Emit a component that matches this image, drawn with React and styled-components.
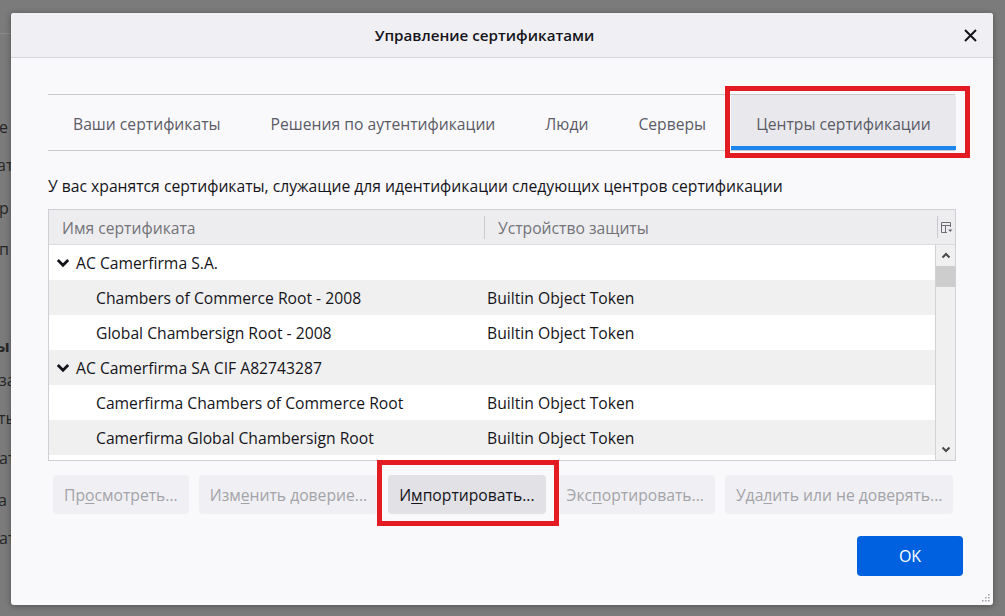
import React from 'react';
import styled, { createGlobalStyle } from 'styled-components';

const FONT = '"Open Sans", "Noto Sans", "Liberation Sans", sans-serif';
const FS = '15.7px';

const GlobalStyle = createGlobalStyle`
  html, body { margin: 0; padding: 0; }
  body {
    width: 1005px;
    height: 616px;
    overflow: hidden;
    background: #7b7b7b;
    font-family: ${FONT};
  }
`;

const Screen = styled.div`
  position: relative;
  width: 1005px;
  height: 616px;
  overflow: hidden;
  background: #7b7b7b;
`;

const Backdrop = styled.div`
  display: flex;
  flex-direction: column;
  width: 11px;
  overflow: hidden;
  padding-top: 33px;
  font-size: 16px;
  color: #262626;
`;

const BackdropRule = styled.div`
  height: 1px;
  background: #8a8a8a;
`;

const BackdropLine = styled.div`
  white-space: nowrap;
  line-height: 20px;
  margin-top: ${(p) => p.$gap}px;
  margin-left: ${(p) => p.$shift || 0}px;
  font-weight: ${(p) => (p.$bold ? 700 : 400)};
`;

const Dialog = styled.div`
  position: absolute;
  left: 11px;
  top: 13px;
  width: 982px;
  height: 592px;
  background: #f9f9fb;
  border-radius: 3px;
  box-shadow: 0 1px 6px rgba(0, 0, 0, 0.35);
  display: flex;
  flex-direction: column;
  overflow: hidden;
`;

const TitleBar = styled.div`
  height: 44px;
  flex: none;
  display: flex;
  align-items: center;
  background: #f0f0f4;
  border-bottom: 1px solid #d4d4da;
`;

const Title = styled.div`
  flex: 1;
  text-align: center;
  font-size: 15.2px;
  font-weight: 600;
  color: #15141a;
`;

const CloseButton = styled.div`
  width: 24px;
  height: 24px;
  margin-right: 11px;
  display: flex;
  align-items: center;
  justify-content: center;
`;

const Body = styled.div`
  display: flex;
  flex-direction: column;
  padding: 36px 37px 0 37px;
`;

const Tabs = styled.div`
  display: flex;
  width: 907px;
  border-top: 1px solid #c9c9cf;
  border-bottom: 1px solid #c9c9cf;
`;

const Tab = styled.div`
  height: 55px;
  box-sizing: border-box;
  padding: 7px 25px 0;
  display: flex;
  align-items: center;
  font-size: ${FS};
  color: #5b5b66;
  white-space: nowrap;
  background: ${(p) => (p.$active ? '#e9e9ed' : 'transparent')};
  border-bottom: 4px solid ${(p) => (p.$active ? '#1a86ee' : 'transparent')};
`;

const Description = styled.div`
  margin-top: 25px;
  font-size: ${FS};
  line-height: 20px;
  color: #15141a;
  white-space: nowrap;
`;

const Table = styled.div`
  margin-top: 13px;
  width: 908px;
  height: 252px;
  box-sizing: border-box;
  border: 1px solid #cfcfd6;
  display: flex;
  flex-direction: column;
  background: #fff;
`;

const Header = styled.div`
  height: 35px;
  flex: none;
  box-sizing: border-box;
  border-bottom: 1px solid #dcdce0;
  background: #ededf0;
  display: grid;
  grid-template-columns: 435px 1fr 18px;
  align-items: center;
`;

const HeaderCell = styled.div`
  height: 22px;
  display: flex;
  align-items: center;
  padding: 1px 0 0 13px;
  font-size: ${FS};
  color: #737378;
  white-space: nowrap;
  border-left: ${(p) => (p.$sep ? '1px solid #c9c9cf' : 'none')};
`;

const PickerCell = styled.div`
  height: 22px;
  display: flex;
  align-items: center;
  justify-content: center;
  border-left: 1px solid #c9c9cf;
`;

const TableBody = styled.div`
  flex: 1;
  display: grid;
  grid-template-columns: 1fr 20px;
  overflow: hidden;
`;

const Rows = styled.div`
  overflow: hidden;
`;

const Row = styled.div`
  height: 35px;
  box-sizing: border-box;
  padding-top: 1px;
  display: grid;
  grid-template-columns: 435px 1fr;
  align-items: center;
  background: ${(p) => (p.$odd ? '#f0f0f0' : '#ffffff')};
  font-size: ${FS};
  color: #15141a;
  white-space: nowrap;
`;

const NameCell = styled.div`
  display: flex;
  align-items: center;
  gap: 6px;
  padding-left: ${(p) => (p.$group ? 7 : 47)}px;
`;

const TokenCell = styled.div`
  padding-left: 3px;
`;

const Scrollbar = styled.div`
  display: flex;
  flex-direction: column;
  background: #f0f0f0;
  border-left: 1px solid #d2d2d2;
`;

const ScrollArrow = styled.div`
  height: 21px;
  flex: none;
  display: flex;
  align-items: center;
  justify-content: center;
`;

const ScrollThumb = styled.div`
  height: 21px;
  flex: none;
  background: #cdcdcd;
`;

const ScrollTrack = styled.div`
  flex: 1;
`;

const ButtonRow = styled.div`
  display: flex;
  gap: 10px;
  margin: 14px 0 0 5px;
`;

const Button = styled.div`
  height: 39px;
  box-sizing: border-box;
  padding: 0 11px;
  display: flex;
  align-items: center;
  border-radius: 4px;
  font-size: ${FS};
  white-space: nowrap;
  background: ${(p) => (p.$disabled ? '#f0f0f4' : '#e1e1e6')};
  color: ${(p) => (p.$disabled ? '#a3a3a8' : '#15141a')};
`;

const Key = styled.span`
  text-decoration: underline;
  text-underline-offset: 2px;
`;

const Footer = styled.div`
  display: flex;
  justify-content: flex-end;
  padding: 22px 30px 0 0;
`;

const PrimaryButton = styled.div`
  width: 106px;
  height: 40px;
  border-radius: 4px;
  background: #0061e0;
  color: #fff;
  font-size: 16px;
  display: flex;
  align-items: center;
  justify-content: center;
`;

const Grip = styled.svg`
  position: absolute;
  right: 3px;
  bottom: 3px;
`;

const Highlight = styled.div`
  position: absolute;
  left: ${(p) => p.$x}px;
  top: ${(p) => p.$y}px;
  width: ${(p) => p.$w}px;
  height: ${(p) => p.$h}px;
  box-sizing: border-box;
  border: 5px solid #e31b23;
  pointer-events: none;
`;

const Chevron = () => (
  <svg width="14" height="10" viewBox="0 0 14 10">
    <path d="M1.8 2 L7 7.2 L12.2 2" fill="none" stroke="#15141a" strokeWidth="2.8" />
  </svg>
);

const groups = [
  {
    name: 'AC Camerfirma S.A.',
    items: ['Chambers of Commerce Root - 2008', 'Global Chambersign Root - 2008'],
  },
  {
    name: 'AC Camerfirma SA CIF A82743287',
    items: ['Camerfirma Chambers of Commerce Root', 'Camerfirma Global Chambersign Root'],
  },
  {
    name: 'ACCV',
    items: ['ACCVRAIZ1'],
  },
];

const rows = [];
groups.forEach((g) => {
  rows.push({ group: true, name: g.name });
  g.items.forEach((i) => rows.push({ group: false, name: i, token: 'Builtin Object Token' }));
});

export default function App() {
  return (
    <Screen>
      <GlobalStyle />
      <Backdrop>
        <BackdropRule />
        <BackdropLine $gap={83} $shift={-1}>е с</BackdropLine>
        <BackdropLine $gap={18} $shift={-3}>ат</BackdropLine>
        <BackdropLine $gap={23} $shift={-1}>р</BackdropLine>
        <BackdropLine $gap={21} $shift={-5}>іп</BackdropLine>
        <BackdropLine $gap={77} $shift={-4} $bold>ы</BackdropLine>
        <BackdropLine $gap={14} $shift={-1}>за</BackdropLine>
        <BackdropLine $gap={18} $shift={-2}>ть</BackdropLine>
        <BackdropLine $gap={20} $shift={-1}>ат</BackdropLine>
        <BackdropLine $gap={22} $shift={-2}>а</BackdropLine>
        <BackdropLine $gap={18} $shift={-1}>ат</BackdropLine>
      </Backdrop>

      <Dialog>
        <TitleBar>
          <Title>Управление сертификатами</Title>
          <CloseButton>
            <svg width="13" height="13" viewBox="0 0 13 13">
              <path d="M1 1 L12 12 M12 1 L1 12" stroke="#15141a" strokeWidth="2" />
            </svg>
          </CloseButton>
        </TitleBar>

        <Body>
          <Tabs>
            <Tab>Ваши сертификаты</Tab>
            <Tab>Решения по аутентификации</Tab>
            <Tab>Люди</Tab>
            <Tab>Серверы</Tab>
            <Tab $active>Центры сертификации</Tab>
          </Tabs>

          <Description>
            У вас хранятся сертификаты, служащие для идентификации следующих центров сертификации
          </Description>

          <Table>
            <Header>
              <HeaderCell>Имя сертификата</HeaderCell>
              <HeaderCell $sep>Устройство защиты</HeaderCell>
              <PickerCell>
                <svg width="13" height="13" viewBox="0 0 13 13">
                  <path d="M1.5 1.5 H10.5 V6 M1.5 1.5 V11.5 H7 M1.5 4.5 H10.5 M5.5 4.5 V11.5" fill="none" stroke="#6d6d72" strokeWidth="1" />
                  <path d="M8 8.5 H12.5 L10.25 11 Z" fill="#6d6d72" />
                </svg>
              </PickerCell>
            </Header>
            <TableBody>
              <Rows>
                {rows.map((r, i) => (
                  <Row key={i} $odd={i % 2 === 1}>
                    <NameCell $group={r.group}>
                      {r.group && <Chevron />}
                      {r.name}
                    </NameCell>
                    <TokenCell>{r.token || ''}</TokenCell>
                  </Row>
                ))}
              </Rows>
              <Scrollbar>
                <ScrollArrow>
                  <svg width="10" height="7" viewBox="0 0 10 7">
                    <path d="M1.5 5.5 L5 2 L8.5 5.5" fill="none" stroke="#4a4a4a" strokeWidth="2" />
                  </svg>
                </ScrollArrow>
                <ScrollThumb />
                <ScrollTrack />
                <ScrollArrow>
                  <svg width="10" height="7" viewBox="0 0 10 7">
                    <path d="M1.5 1.5 L5 5 L8.5 1.5" fill="none" stroke="#4a4a4a" strokeWidth="2" />
                  </svg>
                </ScrollArrow>
              </Scrollbar>
            </TableBody>
          </Table>

          <ButtonRow>
            <Button $disabled>Пр<Key>о</Key>смотреть...</Button>
            <Button $disabled>Изм<Key>е</Key>нить доверие...</Button>
            <Button>И<Key>м</Key>портировать...</Button>
            <Button $disabled>Экс<Key>п</Key>ортировать...</Button>
            <Button $disabled>Уда<Key>л</Key>ить или не доверять...</Button>
          </ButtonRow>
        </Body>

        <Footer>
          <PrimaryButton>OK</PrimaryButton>
        </Footer>

        <Grip width="10" height="10" viewBox="0 0 10 10">
          <g fill="#a0a0a6">
            <rect x="8" y="2" width="1.5" height="1.5" />
            <rect x="5" y="5" width="1.5" height="1.5" />
            <rect x="8" y="5" width="1.5" height="1.5" />
            <rect x="2" y="8" width="1.5" height="1.5" />
            <rect x="5" y="8" width="1.5" height="1.5" />
            <rect x="8" y="8" width="1.5" height="1.5" />
          </g>
        </Grip>
      </Dialog>

      <Highlight $x={725} $y={86} $w={245} $h={72} />
      <Highlight $x={377} $y={460} $w={182} $h={66} />
    </Screen>
  );
}
